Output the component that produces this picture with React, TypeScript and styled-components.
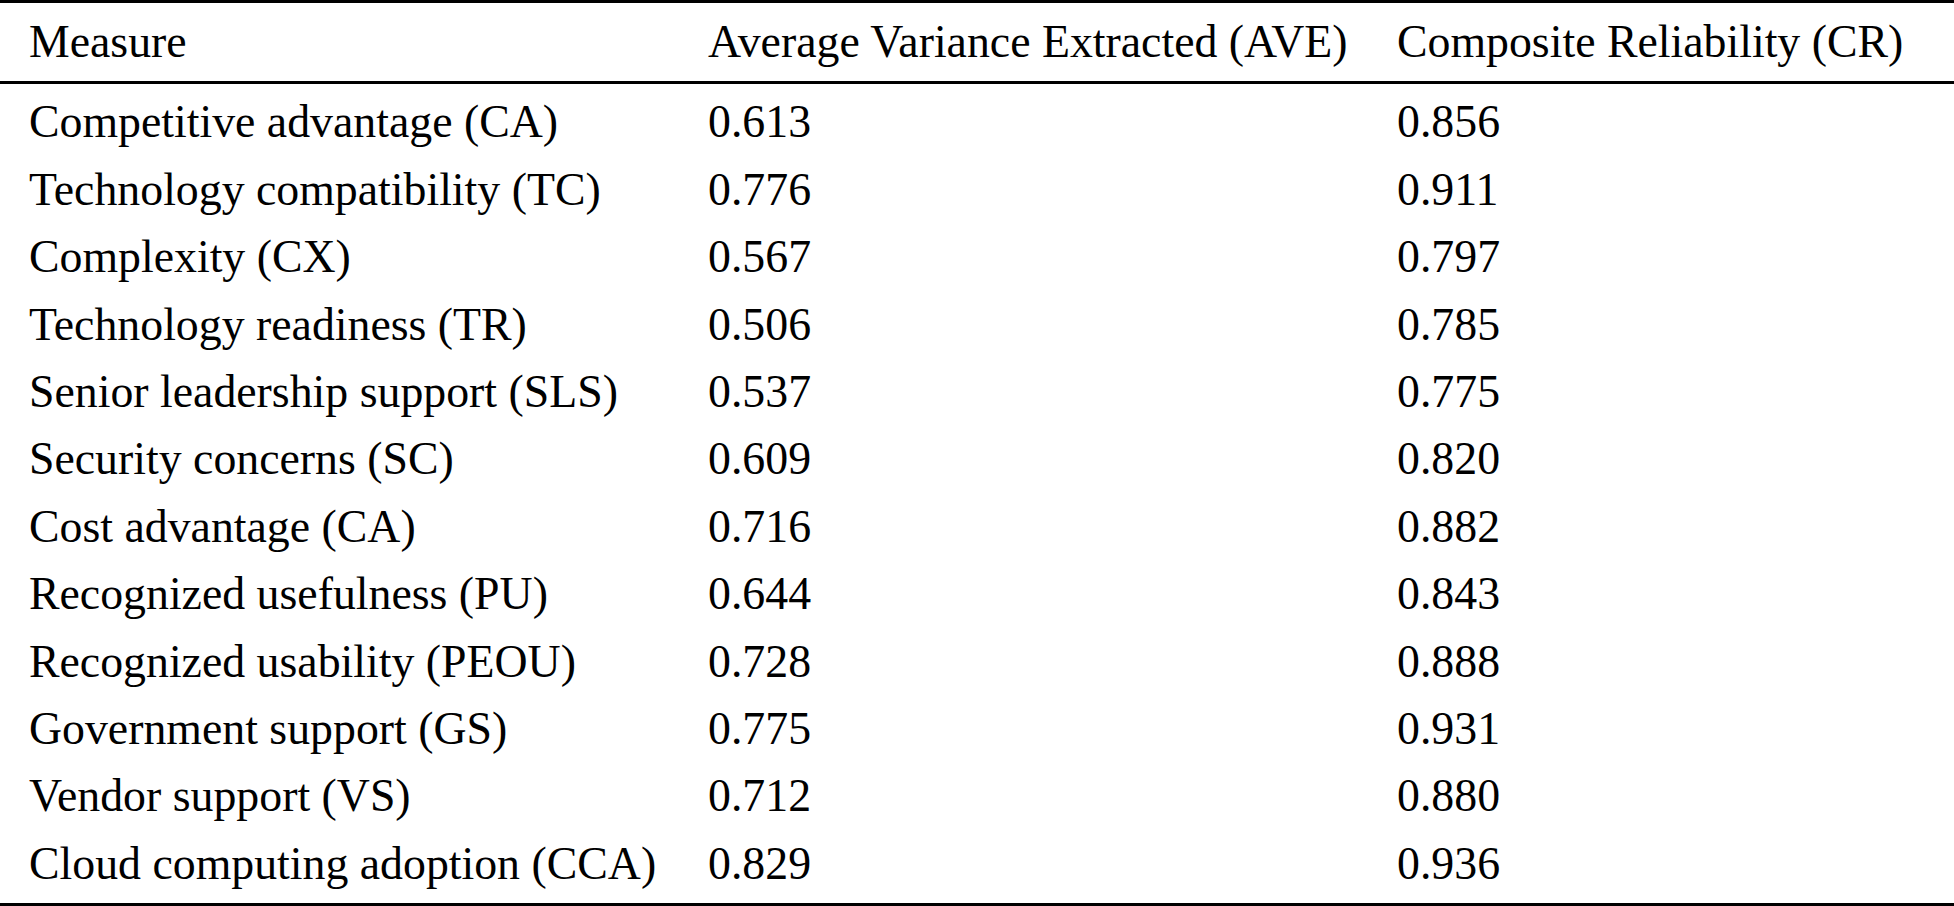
import React from "react";
import styled, { createGlobalStyle } from "styled-components";

const Global = createGlobalStyle`
  html, body { margin: 0; padding: 0; background: #fff; }
  body { font-family: "Liberation Serif", "Times New Roman", serif; color: #000; }
`;

const Table = styled.div`
  width: 1954px;
  border-top: 3px solid #000;
  border-bottom: 3px solid #000;
  font-size: 45.8px;
  line-height: 67.4px;
`;

const Head = styled.div`
  padding: 4.5px 0 6px;
  border-bottom: 3px solid #000;
`;

const Body = styled.div`
  padding: 4.5px 0 5.5px;
`;

const Row = styled.div`
  display: grid;
  grid-template-columns: 679px 689px 1fr;
  padding-left: 29px;
  height: 67.4px;
  white-space: nowrap;
`;

const Cell = styled.div``;

const rows: [string, string, string][] = [
  ["Competitive advantage (CA)", "0.613", "0.856"],
  ["Technology compatibility (TC)", "0.776", "0.911"],
  ["Complexity (CX)", "0.567", "0.797"],
  ["Technology readiness (TR)", "0.506", "0.785"],
  ["Senior leadership support (SLS)", "0.537", "0.775"],
  ["Security concerns (SC)", "0.609", "0.820"],
  ["Cost advantage (CA)", "0.716", "0.882"],
  ["Recognized usefulness (PU)", "0.644", "0.843"],
  ["Recognized usability (PEOU)", "0.728", "0.888"],
  ["Government support (GS)", "0.775", "0.931"],
  ["Vendor support (VS)", "0.712", "0.880"],
  ["Cloud computing adoption (CCA)", "0.829", "0.936"],
];

export default function App() {
  return (
    <>
      <Global />
      <Table>
        <Head>
          <Row>
            <Cell>Measure</Cell>
            <Cell>Average Variance Extracted (AVE)</Cell>
            <Cell>Composite Reliability (CR)</Cell>
          </Row>
        </Head>
        <Body>
          {rows.map((r) => (
            <Row key={r[0]}>
              <Cell>{r[0]}</Cell>
              <Cell>{r[1]}</Cell>
              <Cell>{r[2]}</Cell>
            </Row>
          ))}
        </Body>
      </Table>
    </>
  );
}
